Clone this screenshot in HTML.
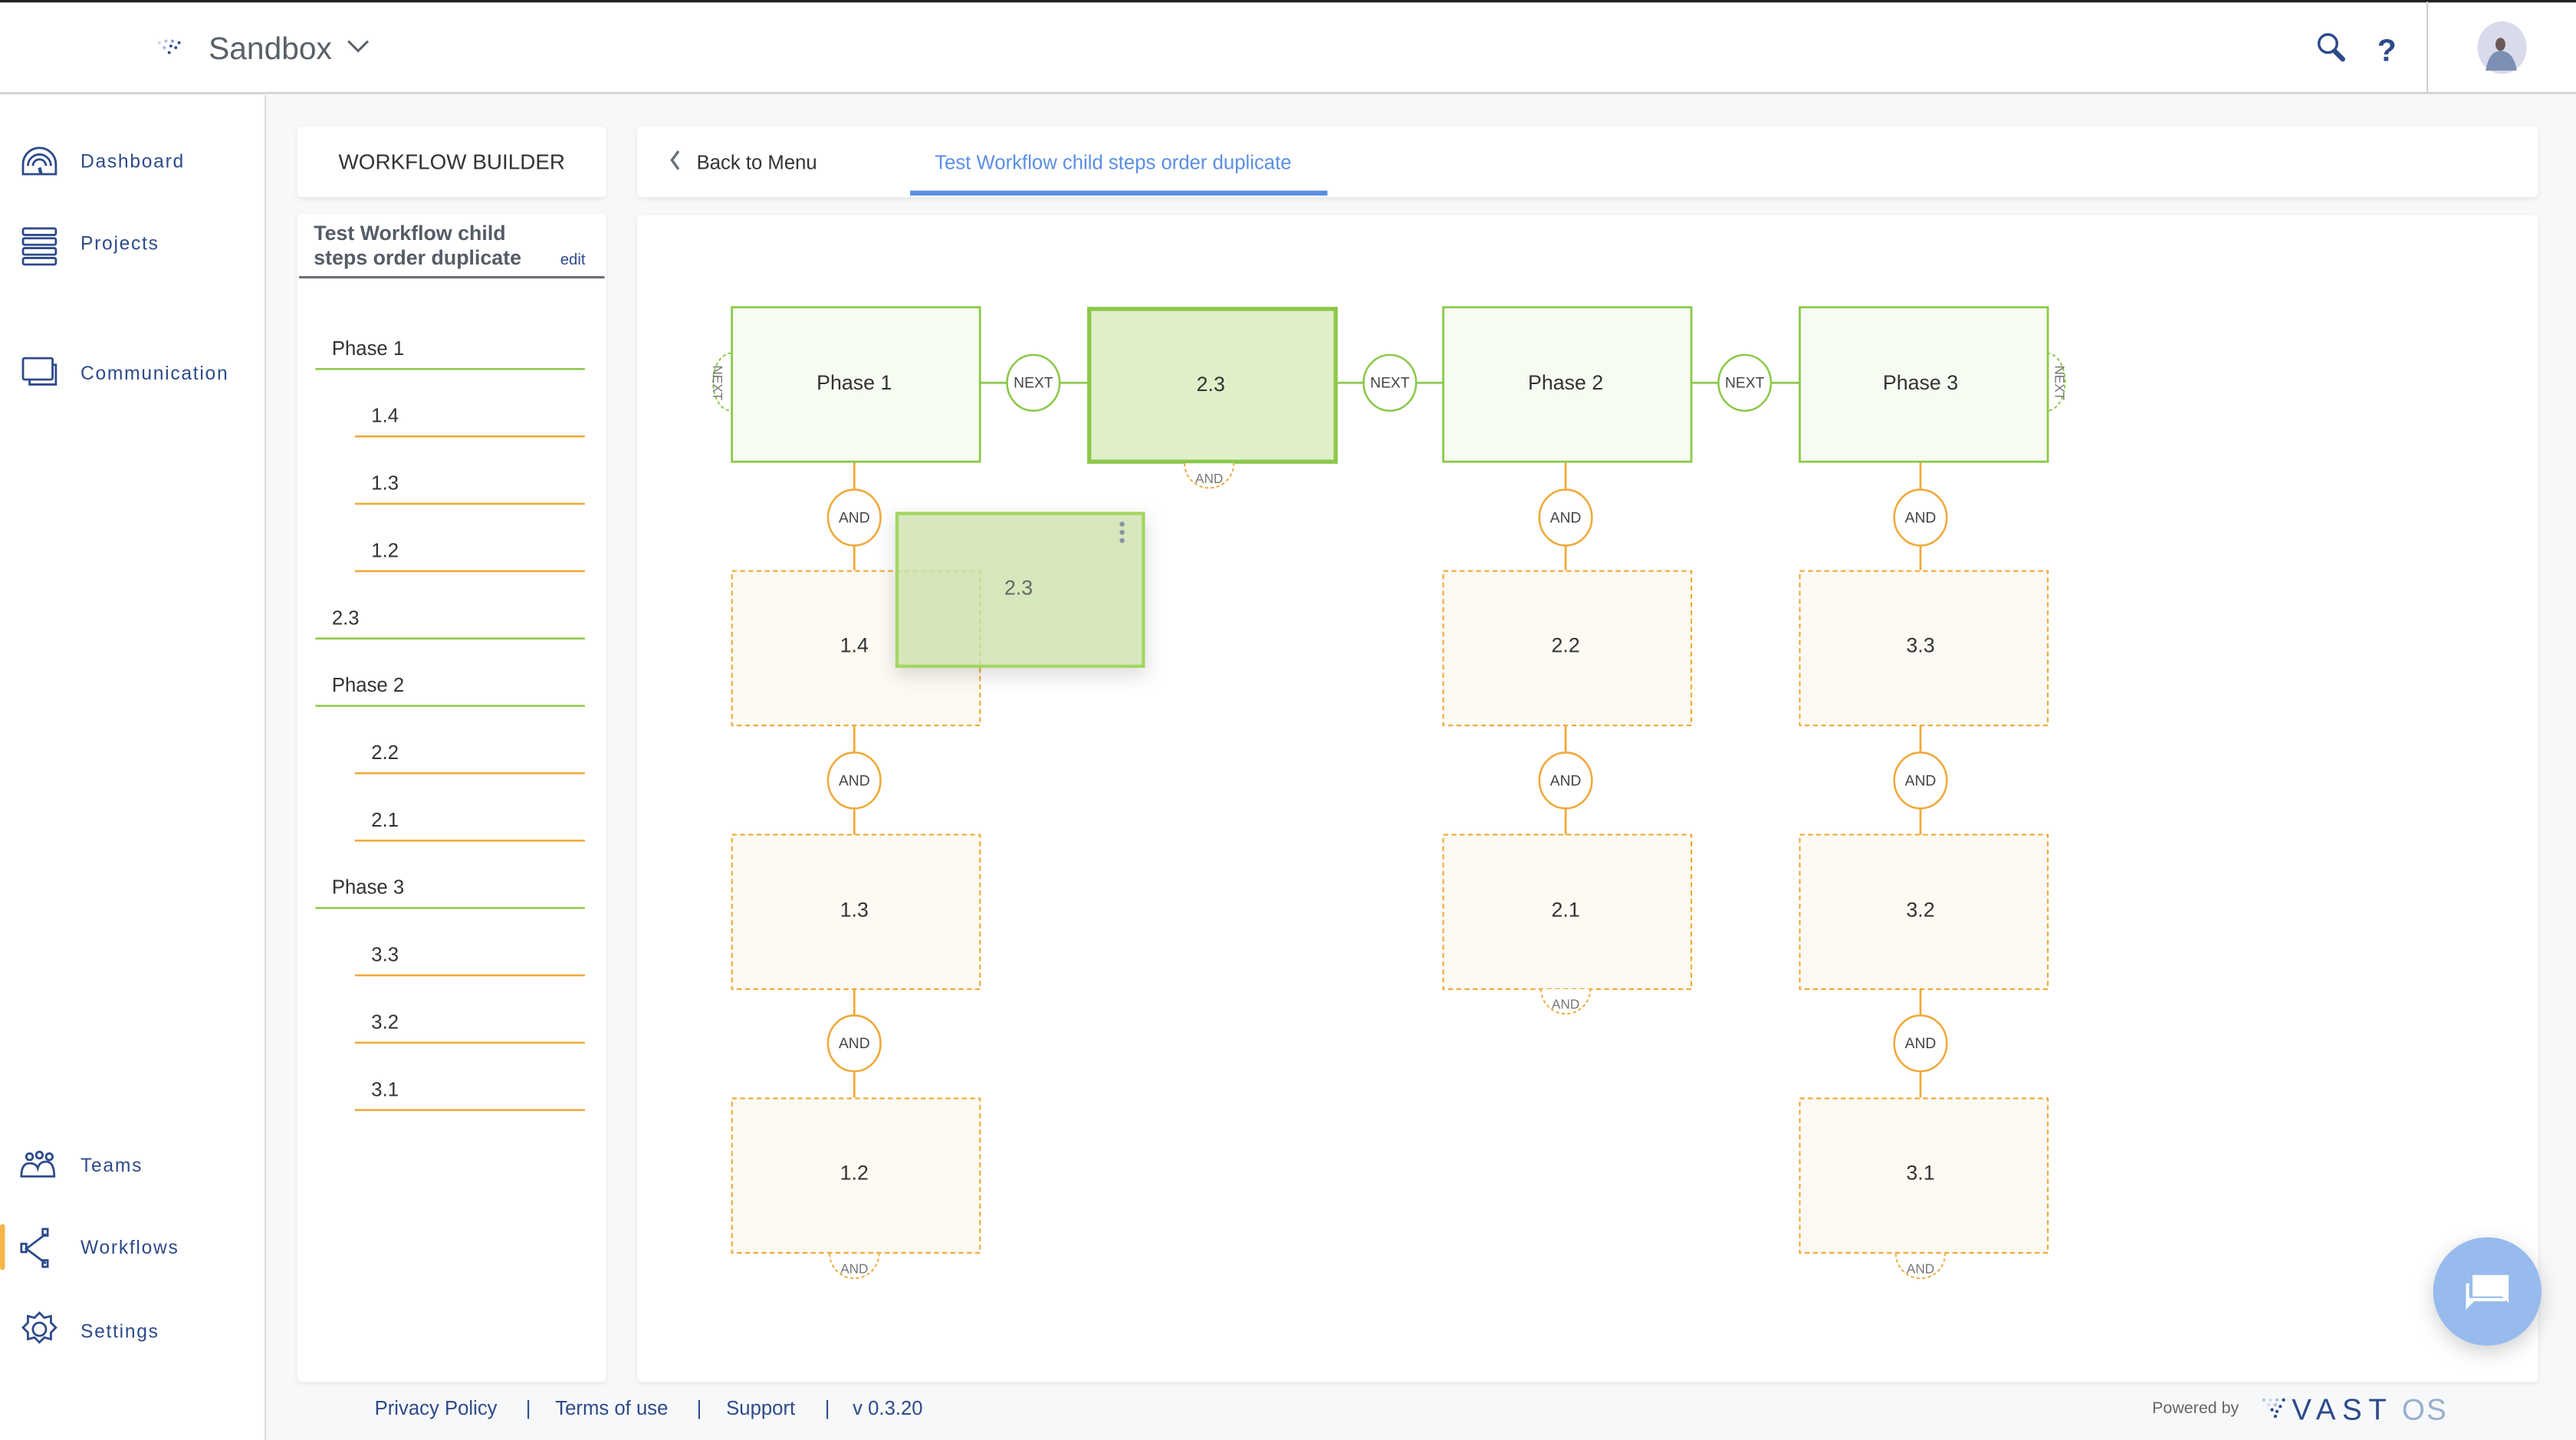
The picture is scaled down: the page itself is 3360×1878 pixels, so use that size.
<!DOCTYPE html>
<html><head><meta charset="utf-8"><style>
html,body{margin:0;padding:0;background:#f7f8fa;}
svg{display:block}
text{font-family:"Liberation Sans",sans-serif}
</style></head><body>
<svg width="3360" height="1878" viewBox="0 0 1568 876.4" xmlns="http://www.w3.org/2000/svg">
<defs>
<filter id="sh" x="-20%" y="-20%" width="140%" height="140%"><feDropShadow dx="0" dy="1" stdDeviation="1.5" flood-color="#000" flood-opacity="0.08"/></filter>
<filter id="sh2" x="-30%" y="-30%" width="160%" height="160%"><feDropShadow dx="0" dy="4" stdDeviation="6" flood-color="#000" flood-opacity="0.18"/></filter>
</defs>
<rect width="1568" height="876.4" fill="#f7f8fa"/>
<rect x="0" y="0" width="1568" height="57" fill="#fff"/>
<rect x="0" y="0" width="1568" height="1.5" fill="#222"/>
<rect x="0" y="56" width="1568" height="1.2" fill="#cfd0d2"/>
<rect x="1477" y="1" width="1" height="56" fill="#d0d0d0"/>
<g transform="translate(96,22)">
<circle cx="1" cy="4" r="0.9" fill="#c7d6ee"/><circle cx="5" cy="3" r="0.9" fill="#a9bede"/><circle cx="9" cy="3" r="0.9" fill="#7d97c4"/><circle cx="13" cy="4" r="0.9" fill="#2d4a8a"/>
<circle cx="4" cy="7" r="0.9" fill="#9fb3d6"/><circle cx="8" cy="6" r="0.9" fill="#2d4a8a"/><circle cx="11" cy="7" r="0.9" fill="#2d4a8a"/>
<circle cx="7" cy="10" r="0.9" fill="#2d4a8a"/>
</g>
<text x="127" y="36" font-size="19" fill="#5a6068">Sandbox</text>
<path d="M212 25 l6 6 l6 -6" fill="none" stroke="#5a6068" stroke-width="1.4"/>
<g stroke="#2d4a8a" fill="none" stroke-width="1.6">
<circle cx="1417" cy="26.5" r="5.5"/>
<path d="M1421 31 l5 5" stroke-width="3" stroke-linecap="round"/>
</g>
<text x="1447" y="37" font-size="19" font-weight="bold" fill="#2d4a8a">?</text>
<ellipse cx="1523" cy="29" rx="15" ry="16" fill="#d9dbeb"/>
<ellipse cx="1522" cy="27" rx="3" ry="4" fill="#6a5a55"/>
<path d="M1513 43 q2 -12 9 -12 q8 0 10 12 z" fill="#7d8fb5"/>
<rect x="0" y="58" width="161" height="818.4" fill="#fff" filter="url(#sh)"/>
<rect x="161" y="58" width="1" height="818.4" fill="#ddd"/>
<g fill="none" stroke="#2d4a8a" stroke-width="1.3">
<path d="M14 106 v-6 a10 10 0 0 1 20 0 v6 z"/><path d="M17 101 a7 7 0 0 1 14 0"/><path d="M20 101 a4 4 0 0 1 8 0"/><path d="M24 102 l1 4" stroke-width="2"/>
<rect x="14" y="139" width="20" height="4" rx="1"/><rect x="14" y="145" width="20" height="4" rx="1"/><rect x="14" y="151" width="20" height="4" rx="1"/><rect x="14" y="157" width="20" height="4" rx="1"/>
<rect x="14" y="218" width="18" height="13" rx="1"/><path d="M18 231 v3 h16 v-12 h-2"/>
<circle cx="18" cy="704" r="2"/><circle cx="24" cy="703" r="2"/><circle cx="30" cy="704" r="2"/><path d="M13 716 q0 -8 5 -8 q4 0 5 3 q1 -4 5 -4 q5 0 5 9 z"/>
<path d="M28 751 l-12 9 l12 9"/><rect x="26" y="748" width="3" height="4"/><rect x="13" y="757" width="3" height="5"/><rect x="26" y="767" width="3" height="4"/>
<circle cx="24" cy="809" r="4"/><path d="M24 799 l3 3 l4 -1 l0 4 l3 3 l-3 3 l0 4 l-4 -1 l-3 3 l-3 -3 l-4 1 l0 -4 l-3 -3 l3 -3 l0 -4 l4 1 z"/>
</g>
<rect x="0" y="745" width="3" height="28" rx="1.5" fill="#f5b547"/>
<g font-size="11.5" fill="#2d4a8a" letter-spacing="0.8">
<text x="49" y="102">Dashboard</text>
<text x="49" y="152">Projects</text>
<text x="49" y="231">Communication</text>
<text x="49" y="713">Teams</text>
<text x="49" y="763">Workflows</text>
<text x="49" y="814">Settings</text>
</g>
<rect x="181" y="77" width="188" height="43" rx="3" fill="#fff" filter="url(#sh)"/>
<text x="275" y="103" font-size="13" fill="#333" text-anchor="middle">WORKFLOW BUILDER</text>
<rect x="181" y="130" width="188" height="711" rx="3" fill="#fff" filter="url(#sh)"/>
<text x="191" y="146" font-size="12.5" font-weight="bold" fill="#555c66">Test Workflow child</text>
<text x="191" y="161" font-size="12.5" font-weight="bold" fill="#555c66">steps order duplicate</text>
<text x="341" y="161" font-size="9.5" fill="#2d4a8a">edit</text>
<rect x="182" y="168" width="186" height="1.5" fill="#6b7078"/>
<g font-size="12" fill="#333">
<text x="202" y="216">Phase 1</text><rect x="192" y="224" width="164" height="1.2" fill="#8cc84b"/>
<text x="226" y="257">1.4</text><rect x="216" y="265" width="140" height="1.2" fill="#f0a93a"/>
<text x="226" y="298">1.3</text><rect x="216" y="306" width="140" height="1.2" fill="#f0a93a"/>
<text x="226" y="339">1.2</text><rect x="216" y="347" width="140" height="1.2" fill="#f0a93a"/>
<text x="202" y="380">2.3</text><rect x="192" y="388" width="164" height="1.2" fill="#8cc84b"/>
<text x="202" y="421">Phase 2</text><rect x="192" y="429" width="164" height="1.2" fill="#8cc84b"/>
<text x="226" y="462">2.2</text><rect x="216" y="470" width="140" height="1.2" fill="#f0a93a"/>
<text x="226" y="503">2.1</text><rect x="216" y="511" width="140" height="1.2" fill="#f0a93a"/>
<text x="202" y="544">Phase 3</text><rect x="192" y="552" width="164" height="1.2" fill="#8cc84b"/>
<text x="226" y="585">3.3</text><rect x="216" y="593" width="140" height="1.2" fill="#f0a93a"/>
<text x="226" y="626">3.2</text><rect x="216" y="634" width="140" height="1.2" fill="#f0a93a"/>
<text x="226" y="667">3.1</text><rect x="216" y="675" width="140" height="1.2" fill="#f0a93a"/>
</g>
<rect x="388" y="77" width="1157" height="43" rx="3" fill="#fff" filter="url(#sh)"/>
<path d="M413 92 l-4 5.5 l4 5.5" fill="none" stroke="#6b7078" stroke-width="1.6"/>
<text x="424" y="103" font-size="12" fill="#333">Back to Menu</text>
<text x="569" y="103" font-size="12" fill="#5b8fe3">Test Workflow child steps order duplicate</text>
<rect x="554" y="116" width="254" height="3" fill="#5b8fe3"/>
<rect x="388" y="131" width="1157" height="710" rx="3" fill="#fff" filter="url(#sh)"/>
<g stroke="#8cc84b" stroke-width="1.3">
<line x1="596" y1="233" x2="662" y2="233"/><line x1="813" y1="233" x2="878" y2="233"/><line x1="1029" y1="233" x2="1095" y2="233"/>
</g>
<g stroke="#f0a93a" stroke-width="1.3">
<line x1="520" y1="281" x2="520" y2="347"/><line x1="520" y1="441" x2="520" y2="508"/><line x1="520" y1="602" x2="520" y2="668"/>
<line x1="953" y1="281" x2="953" y2="347"/><line x1="953" y1="441" x2="953" y2="508"/>
<line x1="1169" y1="281" x2="1169" y2="347"/><line x1="1169" y1="441" x2="1169" y2="508"/><line x1="1169" y1="602" x2="1169" y2="668"/>
</g>
<g fill="#fff" stroke-dasharray="2 1.5" stroke-width="0.9">
<path d="M445 215 a11 17.5 0 0 0 0 35" stroke="#8cc84b"/>
<path d="M1246 215 a11 17.5 0 0 1 0 35" stroke="#8cc84b"/>
</g>
<g stroke="#8cc84b" stroke-width="1.3" fill="#f7fcf2">
<rect x="445.5" y="187" width="151" height="94"/>
<rect x="878.5" y="187" width="151" height="94"/>
<rect x="1095.5" y="187" width="151" height="94"/>
</g>
<rect x="663" y="188" width="150" height="93" fill="#dff0c8" stroke="#8cc84b" stroke-width="2.5"/>
<g stroke="#f0a93a" stroke-width="1" stroke-dasharray="3 2" fill="#fdfaf3">
<rect x="445.5" y="347.5" width="151" height="94"/><rect x="445.5" y="508" width="151" height="94"/><rect x="445.5" y="668.5" width="151" height="94"/>
<rect x="878.5" y="347.5" width="151" height="94"/><rect x="878.5" y="508" width="151" height="94"/>
<rect x="1095.5" y="347.5" width="151" height="94"/><rect x="1095.5" y="508" width="151" height="94"/><rect x="1095.5" y="668.5" width="151" height="94"/>
</g>
<g fill="#fff" stroke-dasharray="2 1.5" stroke-width="0.9">
<path d="M721 282 a15 15 0 0 0 30 0" stroke="#f0a93a"/>
<path d="M938 602 a15 15 0 0 0 30 0" stroke="#f0a93a"/>
<path d="M505 763 a15 15 0 0 0 30 0" stroke="#f0a93a"/>
<path d="M1154 763 a15 15 0 0 0 30 0" stroke="#f0a93a"/>
</g>
<g font-size="8" fill="#777">
<text x="437" y="233" transform="rotate(90 437 233)" text-anchor="middle" dy="3">NEXT</text>
<text x="1254" y="233" transform="rotate(90 1254 233)" text-anchor="middle" dy="3">NEXT</text>
<text x="736" y="294" text-anchor="middle">AND</text>
<text x="953" y="614" text-anchor="middle">AND</text>
<text x="520" y="775" text-anchor="middle">AND</text>
<text x="1169" y="775" text-anchor="middle">AND</text>
</g>
<g fill="#fff" stroke="#8cc84b" stroke-width="1.2">
<ellipse cx="629" cy="233" rx="16" ry="17"/><ellipse cx="846" cy="233" rx="16" ry="17"/><ellipse cx="1062" cy="233" rx="16" ry="17"/>
</g>
<g font-size="9" fill="#444" text-anchor="middle">
<text x="629" y="236">NEXT</text><text x="846" y="236">NEXT</text><text x="1062" y="236">NEXT</text>
</g>
<g fill="#fff" stroke="#f0a93a" stroke-width="1.2">
<ellipse cx="520" cy="315" rx="16" ry="17"/><ellipse cx="520" cy="475" rx="16" ry="17"/><ellipse cx="520" cy="635" rx="16" ry="17"/>
<ellipse cx="953" cy="315" rx="16" ry="17"/><ellipse cx="953" cy="475" rx="16" ry="17"/>
<ellipse cx="1169" cy="315" rx="16" ry="17"/><ellipse cx="1169" cy="475" rx="16" ry="17"/><ellipse cx="1169" cy="635" rx="16" ry="17"/>
</g>
<g font-size="9" fill="#444" text-anchor="middle">
<text x="520" y="318">AND</text><text x="520" y="478">AND</text><text x="520" y="638">AND</text>
<text x="953" y="318">AND</text><text x="953" y="478">AND</text>
<text x="1169" y="318">AND</text><text x="1169" y="478">AND</text><text x="1169" y="638">AND</text>
</g>
<g font-size="12.5" fill="#333" text-anchor="middle">
<text x="520" y="237">Phase 1</text><text x="737" y="238">2.3</text><text x="953" y="237">Phase 2</text><text x="1169" y="237">Phase 3</text>
<text x="520" y="397">1.4</text><text x="520" y="558">1.3</text><text x="520" y="718">1.2</text>
<text x="953" y="397">2.2</text><text x="953" y="558">2.1</text>
<text x="1169" y="397">3.3</text><text x="1169" y="558">3.2</text><text x="1169" y="718">3.1</text>
</g>
<rect x="546" y="312.5" width="150" height="93" fill="#cfe6b0" fill-opacity="0.78" stroke="#a3d664" stroke-width="2" filter="url(#sh2)"/>
<text x="620" y="362" font-size="12.5" fill="#666" text-anchor="middle">2.3</text>
<g fill="#8a94a0"><circle cx="683" cy="319" r="1.5"/><circle cx="683" cy="324" r="1.5"/><circle cx="683" cy="329" r="1.5"/></g>
<circle cx="1514" cy="786" r="33" fill="#97bbec" filter="url(#sh2)"/>
<path d="M1503 781 h-2 v16 l5 -5 h19 v-2 h-22 z" fill="#fff"/>
<path d="M1505 776 h22 v17 l-4 -4 h-18 z" fill="#fff"/>
<g font-size="12" fill="#2d4a8a">
<text x="228" y="861">Privacy Policy</text><text x="320" y="861">|</text>
<text x="338" y="861">Terms of use</text><text x="424" y="861">|</text>
<text x="442" y="861">Support</text><text x="502" y="861">|</text>
<text x="519" y="861">v 0.3.20</text>
</g>
<text x="1310" y="860" font-size="10" fill="#666">Powered by</text>
<g transform="translate(1377,850)">
<circle cx="1" cy="2" r="1" fill="#b5c6e2"/><circle cx="5" cy="2" r="1" fill="#c8d8f0"/><circle cx="9" cy="2" r="1" fill="#a9bede"/><circle cx="13" cy="2" r="1" fill="#2d4a8a"/>
<circle cx="4" cy="5" r="1" fill="#d0def2"/><circle cx="8" cy="5" r="1" fill="#a9bede"/><circle cx="11" cy="6" r="1" fill="#2d4a8a"/>
<circle cx="6" cy="8" r="1" fill="#2d4a8a"/><circle cx="9" cy="9" r="1" fill="#2d4a8a"/><circle cx="8" cy="12" r="1" fill="#2d4a8a"/>
</g>
<text x="1395" y="864" font-size="18" fill="#2d4a8a" letter-spacing="4">VAST</text>
<text x="1462" y="864" font-size="18" fill="#9ab0cf" letter-spacing="1">OS</text>
</svg>
</body></html>
